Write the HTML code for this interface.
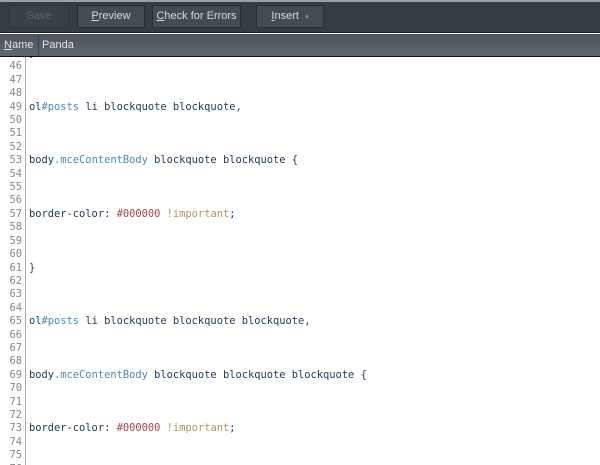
<!DOCTYPE html><html><head><style>
body{margin:0;width:600px;height:465px;overflow:hidden;background:#fff;font-family:"Liberation Sans",sans-serif;position:relative}
.tb{position:absolute;left:0;top:0;width:600px;height:33px;background:#363c44;border-top:2px solid #9aa0a6;box-sizing:border-box;border-bottom:1px solid #1e2226}
.b{position:absolute;top:5px;height:23px;background:#454b53;border:1px solid #2a2e33;box-sizing:border-box;color:#d6d9dc;font-size:11px;line-height:21px;text-align:center}
.nb{position:absolute;left:0;top:34px;width:600px;height:22px;background:linear-gradient(#4d535b,#60666d);border-bottom:1px solid #111}
.nb span{position:absolute;top:5px;font-size:11px;color:#e0e2e4}
.ed{position:absolute;left:0;top:57px;width:600px;height:408px;overflow:hidden}
.g{position:absolute;left:25px;top:0;width:1px;height:408px;background:#a8aaac}
.c{position:absolute;left:0;top:-10px;font-family:"DejaVu Sans Mono","Liberation Mono",monospace;font-size:10.4px}
.l{height:13.41px;line-height:13.41px;white-space:pre;color:#243c58}
.n{display:inline-block;width:22px;text-align:right;color:#83878c;margin-right:7px}
.k{color:#5088b8}.v{color:#a3484b}.i{color:#b5915e}
</style></head><body>
<div class="tb"></div>
<div class="b" style="left:9px;width:60px;color:#5c636b;background:#3a4048;border-color:#30353b">Save</div>
<div class="b" style="left:77px;width:68px"><u>P</u>review</div>
<div class="b" style="left:152px;width:89px"><u>C</u>heck for Errors</div>
<div class="b" style="left:256px;width:68px"><u>I</u>nsert &nbsp;<span style="font-size:7px;color:#999">▾</span></div>
<div class="nb"><span style="left:4px"><u>N</u>ame</span><div style="position:absolute;left:38px;top:0;width:1px;height:22px;background:#3e444b"></div><span style="left:42px">Panda</span></div>
<div class="ed"><div class="g"></div><div class="c">
<div class="l"><span class="n">45</span>}</div>
<div class="l"><span class="n">46</span></div>
<div class="l"><span class="n">47</span></div>
<div class="l"><span class="n">48</span></div>
<div class="l"><span class="n">49</span>ol<span class="k">#posts</span> li blockquote blockquote,</div>
<div class="l"><span class="n">50</span></div>
<div class="l"><span class="n">51</span></div>
<div class="l"><span class="n">52</span></div>
<div class="l"><span class="n">53</span>body<span class="k">.mceContentBody</span> blockquote blockquote {</div>
<div class="l"><span class="n">54</span></div>
<div class="l"><span class="n">55</span></div>
<div class="l"><span class="n">56</span></div>
<div class="l"><span class="n">57</span>border-color: <span class="v">#000000</span> <span class="i">!important</span>;</div>
<div class="l"><span class="n">58</span></div>
<div class="l"><span class="n">59</span></div>
<div class="l"><span class="n">60</span></div>
<div class="l"><span class="n">61</span>}</div>
<div class="l"><span class="n">62</span></div>
<div class="l"><span class="n">63</span></div>
<div class="l"><span class="n">64</span></div>
<div class="l"><span class="n">65</span>ol<span class="k">#posts</span> li blockquote blockquote blockquote,</div>
<div class="l"><span class="n">66</span></div>
<div class="l"><span class="n">67</span></div>
<div class="l"><span class="n">68</span></div>
<div class="l"><span class="n">69</span>body<span class="k">.mceContentBody</span> blockquote blockquote blockquote {</div>
<div class="l"><span class="n">70</span></div>
<div class="l"><span class="n">71</span></div>
<div class="l"><span class="n">72</span></div>
<div class="l"><span class="n">73</span>border-color: <span class="v">#000000</span> <span class="i">!important</span>;</div>
<div class="l"><span class="n">74</span></div>
<div class="l"><span class="n">75</span></div>
<div class="l"><span class="n">76</span></div>
</div></div>
</body></html>
